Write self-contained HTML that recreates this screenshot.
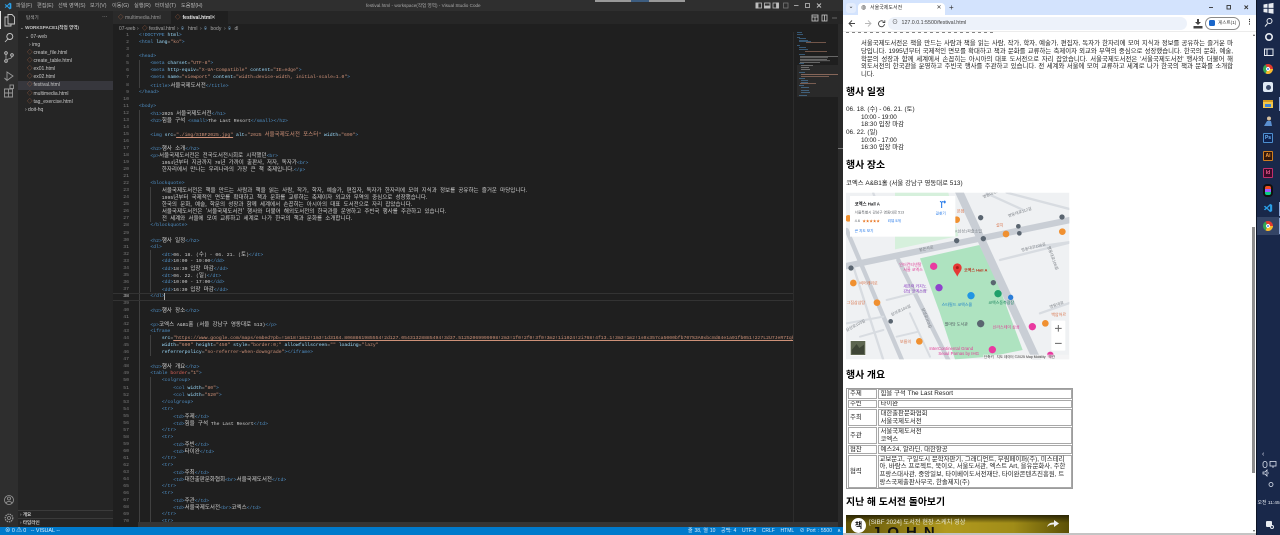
<!DOCTYPE html>
<html lang="ko"><head><meta charset="UTF-8"><title>festival.html</title>
<style>
html,body{margin:0;padding:0;width:1280px;height:535px;overflow:hidden;background:#1f1f1f}
body{position:relative;font-family:"Liberation Sans","Noto Sans CJK KR",sans-serif}
.a{position:absolute;white-space:nowrap}
.r{position:absolute}
#code{position:absolute;left:139px;top:32.2px;font:4.75px/7.05px "Liberation Mono","Noto Sans CJK KR",monospace;color:#cfcfcf;width:654px;height:494.8px;overflow:hidden}
#code div{height:7.05px;white-space:pre}
#code b{font-weight:normal;color:#4f8fc5}
#code i{font-style:normal;color:#9cdcfe}
#code u{text-decoration:none;color:#ce9178}
#code em{font-style:normal;font-size:5.5px;line-height:7.05px;word-spacing:1.65px;font-family:"Noto Sans CJK KR",sans-serif}
#nums{position:absolute;left:113px;width:16px;top:32.2px;font:4.75px/7.05px "Liberation Mono",monospace;color:#7d7d7d;text-align:right;white-space:pre;height:494.8px;overflow:hidden}
.side{color:#c8c8c8;font-size:5px;line-height:8px}
.ic{color:#c0704a;font-size:5.5px;line-height:8px;position:absolute}
.menu{color:#b8b8b8;font-size:5.2px;line-height:8px;top:1.5px}
.p{font-size:6.4px;line-height:8px;color:#1a1a1a}
.j{text-align:justify;text-align-last:justify;width:372px;left:861px;white-space:normal}
.h{font-size:9.9px;line-height:12px;font-weight:700;color:#000;left:846px}
.td{position:absolute;border:1px solid #a8a8a8;box-sizing:border-box;font-size:6.4px;line-height:7.9px;color:#222;padding-left:1.5px;display:flex;align-items:center;background:#fff;overflow:hidden;white-space:nowrap}
.tk{position:absolute;left:1263px;width:10px;height:10px;box-sizing:border-box}
.chrome{border-radius:50%;background:conic-gradient(#e33b2e 0 120deg,#f9bb2d 120deg 240deg,#34a853 240deg 360deg);transform:rotate(-30deg)}
.chrome:after{content:"";position:absolute;left:2.6px;top:2.6px;width:4.8px;height:4.8px;border-radius:50%;background:#4a8ef0;border:.5px solid #fff;box-sizing:border-box}
.ad{font-size:5px;font-weight:700;text-align:center;line-height:8px;border-radius:1px;border:1px solid}
</style></head><body>

<!-- VS Code frame -->
<div class="r" style="left:0;top:0;width:843px;height:11px;background:#2f2f2f"></div>
<div class="r" style="left:18px;top:11px;width:825px;height:13px;background:#262626"></div>
<div class="r" style="left:0;top:11px;width:18px;height:516px;background:#2e2e2e"></div>
<div class="r" style="left:18px;top:11px;width:95px;height:516px;background:#252525"></div>
<div class="r" style="left:113px;top:24px;width:730px;height:503px;background:#1f1f1f"></div>
<div class="r" style="left:171px;top:11px;width:57px;height:13px;background:#1f1f1f"></div>
<div class="r" style="left:113px;top:11px;width:58px;height:13px;background:#2a2a2a"></div>
<div class="r" style="left:0;top:527px;width:843px;height:8px;background:#007acc"></div>

<!-- title bar -->
<svg class="r" style="left:4px;top:2px" width="8" height="8" viewBox="0 0 24 24"><path d="M17 2 7 12l10 10 5-2.5V4.500zM17 7v10l-6-5zM2 8l3-1.500 4 3.500-2.500 2.500zM2 16l3 1.500 4-3.500-2.500-2.500z" fill="#2a9fe8"/></svg>
<span class="a menu" style="left:16px">파일(F)</span>
<span class="a menu" style="left:37px">편집(E)</span>
<span class="a menu" style="left:58px">선택 영역(S)</span>
<span class="a menu" style="left:90px">보기(V)</span>
<span class="a menu" style="left:112px">이동(G)</span>
<span class="a menu" style="left:134px">실행(R)</span>
<span class="a menu" style="left:155px">터미널(T)</span>
<span class="a menu" style="left:181px">도움말(H)</span>
<span class="a" style="left:366px;top:1.5px;font-size:4.6px;line-height:8px;color:#a8a8a8">festival.html - workspace(작업 영역) - Visual Studio Code</span>
<div class="r" style="left:595px;top:0;width:90px;height:1.5px;background:#9a9a9a"></div>
<div class="r" style="left:631px;top:0;width:18px;height:1.5px;background:#3d5d80"></div>
<svg class="r" style="left:755px;top:0" width="88" height="11" fill="none" stroke="#bdbdbd" stroke-width=".8">
<rect x="1" y="3" width="5.5" height="5"/><rect x="1" y="3" width="2" height="5" fill="#bdbdbd"/>
<rect x="9.5" y="3" width="5.5" height="5"/><rect x="9.5" y="6" width="5.5" height="2" fill="#bdbdbd"/>
<rect x="18" y="3" width="5.5" height="5"/><rect x="21.5" y="3" width="2" height="5" fill="#bdbdbd"/>
<rect x="28.5" y="3" width="4.5" height="5" stroke="#777"/>
<path d="M39 5.500h4.500" /><rect x="50.5" y="3.500" width="4" height="4"/><path d="M62 3.500l4 4M66 3.500l-4 4" stroke-width="1"/></svg>

<!-- activity bar -->
<div class="r" style="left:0;top:11px;width:1px;height:18px;background:#e0e0e0"></div>
<svg class="r" style="left:0;top:11px" width="18" height="90" fill="none" stroke="#c9c9c9" stroke-width=".9">
<path d="M8 3.500h4l2.500 2.500v7h-6.500zM8 6H5v9h6v-2"/>
<circle cx="9.800" cy="25.500" r="3"/><path d="M7.800 28 5 31"/>
<circle cx="6" cy="42" r="1.300"/><circle cx="6" cy="50" r="1.300"/><circle cx="12" cy="44" r="1.300"/><path d="M6 43.500v5M12 45.500c0 2.500-4 2-5.500 3.500" stroke="#9a9a9a"/>
<path d="M7 61l6 4-6 4.500zM4.500 67l2 2" stroke="#9a9a9a"/>
<path d="M4.500 78h4v4h-4zM8.500 82h4v-4h-4zM4.500 82h4v4h-4zM8.500 82v4h4v-4z" stroke="#9a9a9a"/><rect x="10" y="74" width="3.500" height="3.500" stroke="#9a9a9a"/></svg>
<svg class="r" style="left:2px;top:493px" width="14" height="30" fill="none" stroke="#9a9a9a" stroke-width=".8">
<circle cx="7" cy="7" r="4.500"/><circle cx="7" cy="5.500" r="1.500"/><path d="M4 10c1-2 5-2 6 0"/>
<circle cx="7" cy="25" r="1.500"/><circle cx="7" cy="25" r="3.800" stroke-dasharray="1.500 .8" stroke-width="1.200"/></svg>

<!-- sidebar -->
<span class="a side" style="left:26px;top:14px;font-size:4.6px;color:#b0b0b0">탐색기</span>
<span class="a side" style="left:102px;top:13px;font-size:5.7px;color:#b0b0b0">···</span>
<span class="a side" style="left:20px;top:24px;font-size:4.6px">⌄ <b>WORKSPACE1(작업 영역)</b></span>
<span class="a side" style="left:25px;top:32.5px">⌄ 07-web</span>
<span class="a side" style="left:29px;top:40.5px">› img</span>
<div class="r" style="left:18px;top:81px;width:95px;height:9px;background:#37373d"></div>
<span class="ic" style="left:27px;top:49px">◇</span><span class="a side" style="left:33.5px;top:49px">create_file.html</span>
<span class="ic" style="left:27px;top:57px">◇</span><span class="a side" style="left:33.5px;top:57px">create_table.html</span>
<span class="ic" style="left:27px;top:65px">◇</span><span class="a side" style="left:33.5px;top:65px">ex01.html</span>
<span class="ic" style="left:27px;top:73px">◇</span><span class="a side" style="left:33.5px;top:73px">ex02.html</span>
<span class="ic" style="left:27px;top:81px">◇</span><span class="a side" style="left:33.5px;top:81px">festival.html</span>
<span class="ic" style="left:27px;top:89.5px">◇</span><span class="a side" style="left:33.5px;top:89.5px">multimedia.html</span>
<span class="ic" style="left:27px;top:98px">◇</span><span class="a side" style="left:33.5px;top:98px">tag_exercise.html</span>
<span class="a side" style="left:25px;top:106px">› doit-hq</span>
<div class="r" style="left:18px;top:510px;width:95px;height:1px;background:#3a3a3a"></div>
<div class="r" style="left:18px;top:518px;width:95px;height:1px;background:#3a3a3a"></div>
<span class="a side" style="left:20px;top:511px;font-size:4.6px">› <b>개요</b></span>
<span class="a side" style="left:20px;top:519px;font-size:4.6px">› <b>타임라인</b></span>

<!-- tabs -->
<span class="ic" style="left:118px;top:14px">◇</span>
<span class="a side" style="left:125px;top:14px;color:#9a9a9a;font-size:5.1px">multimedia.html</span>
<span class="ic" style="left:175px;top:14px">◇</span>
<span class="a side" style="left:182.5px;top:14px;color:#e6e6e6;font-size:5px;font-weight:700">festival.html</span>
<span class="a side" style="left:211px;top:14px;color:#d8d8d8;font-size:5.5px">✕</span>
<svg class="r" style="left:810px;top:13px" width="30" height="10" fill="none" stroke="#c8c8c8" stroke-width=".8"><rect x="2" y="2" width="6" height="6"/><path d="M2 4h6M5 4v4"/><rect x="12" y="2" width="5" height="6"/><path d="M14.500 2v6"/><path d="M22 5h5" stroke="#777"/></svg>
<span class="a side" style="left:119px;top:24.5px;color:#a4a4a4">07-web</span>
<span class="a side" style="left:137px;top:24.5px;color:#a4a4a4">›</span>
<span class="ic" style="left:142px;top:24.5px">◇</span>
<span class="a side" style="left:149px;top:24.5px;color:#a4a4a4">festival.html</span>
<span class="a side" style="left:177px;top:24.5px;color:#a4a4a4">›</span>
<span class="a side" style="left:181px;top:24.5px;color:#7fb2dc">⌾</span>
<span class="a side" style="left:188px;top:24.5px;color:#a4a4a4">html</span>
<span class="a side" style="left:200px;top:24.5px;color:#a4a4a4">›</span>
<span class="a side" style="left:204px;top:24.5px;color:#7fb2dc">⌾</span>
<span class="a side" style="left:210.5px;top:24.5px;color:#a4a4a4">body</span>
<span class="a side" style="left:224px;top:24.5px;color:#a4a4a4">›</span>
<span class="a side" style="left:228px;top:24.5px;color:#7fb2dc">⌾</span>
<span class="a side" style="left:234.5px;top:24.5px;color:#a4a4a4">dl</span>

<!-- indent guides -->
<div class="r" style="left:139px;top:60px;width:.6px;height:28px;background:#404040"></div>
<div class="r" style="left:139px;top:110px;width:.6px;height:412px;background:#404040"></div>
<div class="r" style="left:150.4px;top:187px;width:.6px;height:35px;background:#404040"></div>
<div class="r" style="left:150.4px;top:250px;width:.6px;height:42px;background:#404040"></div>
<div class="r" style="left:150.4px;top:335px;width:.6px;height:21px;background:#404040"></div>
<div class="r" style="left:150.4px;top:377px;width:.6px;height:145px;background:#404040"></div>
<div class="r" style="left:113px;top:293px;width:680px;height:7.5px;border-top:.5px solid #333;border-bottom:.5px solid #333;box-sizing:border-box"></div>
<div class="r" style="left:164px;top:293px;width:.6px;height:7px;background:#aaa"></div>

<div id="nums">1
2
3
4
5
6
7
8
9
10
11
12
13
14
15
16
17
18
19
20
21
22
23
24
25
26
27
28
29
30
31
32
33
34
35
36
37
<span style="color:#cfcfcf">38</span>
39
40
41
42
43
44
45
46
47
48
49
50
51
52
53
54
55
56
57
58
59
60
61
62
63
64
65
66
67
68
69
70</div>

<div id="code"><div><b>&lt;!DOCTYPE</b> <i>html</i><b>&gt;</b></div>
<div><b>&lt;html</b> <i>lang</i>=<u>"ko"</u><b>&gt;</b></div>
<div></div>
<div><b>&lt;head&gt;</b></div>
<div>    <b>&lt;meta</b> <i>charset</i>=<u>"UTF-8"</u><b>&gt;</b></div>
<div>    <b>&lt;meta</b> <i>http-equiv</i>=<u>"X-UA-Compatible"</u> <i>content</i>=<u>"IE=edge"</u><b>&gt;</b></div>
<div>    <b>&lt;meta</b> <i>name</i>=<u>"viewport"</u> <i>content</i>=<u>"width=device-width, initial-scale=1.0"</u><b>&gt;</b></div>
<div>    <b>&lt;title&gt;</b><em>서울국제도서전</em><b>&lt;/title&gt;</b></div>
<div><b>&lt;/head&gt;</b></div>
<div></div>
<div><b>&lt;body&gt;</b></div>
<div>    <b>&lt;h1&gt;</b>2025 <em>서울국제도서전</em><b>&lt;/h1&gt;</b></div>
<div>    <b>&lt;h2&gt;</b><em>힘을 구석</em> <b>&lt;small&gt;</b>The Last Resort<b>&lt;/small&gt;&lt;/h2&gt;</b></div>
<div></div>
<div>    <b>&lt;img</b> <i>src</i>=<u style="text-decoration:underline">"./img/SIBF2025.jpg"</u> <i>alt</i>=<u>"2025 <em>서울국제도서전 포스터</em>"</u> <i>width</i>=<u>"600"</u><b>&gt;</b></div>
<div></div>
<div>    <b>&lt;h2&gt;</b><em>행사 소개</em><b>&lt;/h2&gt;</b></div>
<div>    <b>&lt;p&gt;</b><em>서울국제도서전은 전국도서전시회로 시작했던</em><b>&lt;br&gt;</b></div>
<div>        1954<em>년부터 지금까지</em> 70<em>년 가까이 출판사, 저자, 독자가</em><b>&lt;br&gt;</b></div>
<div>        <em>한자리에서 만나는 우리나라의 가장 큰 책 축제입니다.</em><b>&lt;/p&gt;</b></div>
<div></div>
<div>    <b>&lt;blockquote&gt;</b></div>
<div>        <em>서울국제도서전은 책을 만드는 사람과 책을 읽는 사람, 작가, 학자, 예술가, 편집자, 독자가 한자리에 모여 지식과 정보를 공유하는 즐거운 마당입니다.</em></div>
<div>        1995<em>년부터 국제적인 면모를 확대하고 책과 문화를 교류하는 축제이자 외교와 무역의 중심으로 성장했습니다.</em></div>
<div>        <em>한국의 문화, 예술, 학문의 성장과 함께 세계에서 손꼽히는 아시아의 대표 도서전으로 자리 잡았습니다.</em></div>
<div>        <em>서울국제도서전은 '서울국제도서전' 행사와 더불어 해외도서전의 한국관을 운영하고 주빈국 행사를 주관하고 있습니다.</em></div>
<div>        <em>전 세계와 서울에 모여 교류하고 세계로 나가 한국의 책과 문화를 소개합니다.</em></div>
<div>    <b>&lt;/blockquote&gt;</b></div>
<div></div>
<div>    <b>&lt;h2&gt;</b><em>행사 일정</em><b>&lt;/h2&gt;</b></div>
<div>    <b>&lt;dl&gt;</b></div>
<div>        <b>&lt;dt&gt;</b>06. 18. (<em>수</em>) - 06. 21. (<em>토</em>)<b>&lt;/dt&gt;</b></div>
<div>        <b>&lt;dd&gt;</b>10:00 - 19:00<b>&lt;/dd&gt;</b></div>
<div>        <b>&lt;dd&gt;</b>18:30 <em>입장 마감</em><b>&lt;/dd&gt;</b></div>
<div>        <b>&lt;dt&gt;</b>06. 22. (<em>일</em>)<b>&lt;/dt&gt;</b></div>
<div>        <b>&lt;dd&gt;</b>10:00 - 17:00<b>&lt;/dd&gt;</b></div>
<div>        <b>&lt;dd&gt;</b>16:30 <em>입장 마감</em><b>&lt;/dd&gt;</b></div>
<div>    <b>&lt;/dl&gt;</b></div>
<div></div>
<div>    <b>&lt;h2&gt;</b><em>행사 장소</em><b>&lt;/h2&gt;</b></div>
<div></div>
<div>    <b>&lt;p&gt;</b><em>코엑스</em> A&amp;B1<em>홀</em> (<em>서울 강남구 영동대로</em> 513)<b>&lt;/p&gt;</b></div>
<div>    <b>&lt;iframe</b></div>
<div>        <i>src</i>=<u style="text-decoration:underline">"https://www.google.com/maps/embed?pb=!1m18!1m12!1m3!1d3164.8068861985554!2d127.05431328885494!3d37.51252069999998!2m3!1f0!2f0!3f0!3m2!1i1024!2i768!4f13.1!3m3!1m2!1s0x357ca5000bfb707%3A0xbc8d84e1a91fb051!2z7L2U7JeR7Iqk</u></div>
<div>        <i>width</i>=<u>"600"</u> <i>height</i>=<u>"450"</u> <i>style</i>=<u>"border:0;"</u> <i>allowfullscreen</i>=<u>""</u> <i>loading</i>=<u>"lazy"</u></div>
<div>        <i>referrerpolicy</i>=<u>"no-referrer-when-downgrade"</u><b>&gt;&lt;/iframe&gt;</b></div>
<div></div>
<div>    <b>&lt;h2&gt;</b><em>행사 개요</em><b>&lt;/h2&gt;</b></div>
<div>    <b>&lt;table</b> <i style="color:#e0645a">border</i>=<u>"1"</u><b>&gt;</b></div>
<div>        <b>&lt;colgroup&gt;</b></div>
<div>            <b>&lt;col</b> <i>width</i>=<u>"80"</u><b>&gt;</b></div>
<div>            <b>&lt;col</b> <i>width</i>=<u>"520"</u><b>&gt;</b></div>
<div>        <b>&lt;/colgroup&gt;</b></div>
<div>        <b>&lt;tr&gt;</b></div>
<div>            <b>&lt;td&gt;</b><em>주제</em><b>&lt;/td&gt;</b></div>
<div>            <b>&lt;td&gt;</b><em>힘을 구석</em> The Last Resort<b>&lt;/td&gt;</b></div>
<div>        <b>&lt;/tr&gt;</b></div>
<div>        <b>&lt;tr&gt;</b></div>
<div>            <b>&lt;td&gt;</b><em>주빈</em><b>&lt;/td&gt;</b></div>
<div>            <b>&lt;td&gt;</b><em>타이완</em><b>&lt;/td&gt;</b></div>
<div>        <b>&lt;/tr&gt;</b></div>
<div>        <b>&lt;tr&gt;</b></div>
<div>            <b>&lt;td&gt;</b><em>주최</em><b>&lt;/td&gt;</b></div>
<div>            <b>&lt;td&gt;</b><em>대한출판문화협회</em><b>&lt;br&gt;</b><em>서울국제도서전</em><b>&lt;/td&gt;</b></div>
<div>        <b>&lt;/tr&gt;</b></div>
<div>        <b>&lt;tr&gt;</b></div>
<div>            <b>&lt;td&gt;</b><em>주관</em><b>&lt;/td&gt;</b></div>
<div>            <b>&lt;td&gt;</b><em>서울국제도서전</em><b>&lt;br&gt;</b><em>코엑스</em><b>&lt;/td&gt;</b></div>
<div>        <b>&lt;/tr&gt;</b></div>
<div>        <b>&lt;tr&gt;</b></div></div>

<!-- editor scrollbars/minimap -->
<div class="r" style="left:138px;top:522px;width:705px;height:5px;background:#3b3b3b;opacity:.8"></div>
<div class="r" style="left:793px;top:32px;width:.7px;height:490px;background:#2c2c2c"></div>
<div class="r" style="left:838px;top:24px;width:5px;height:503px;background:#2a2a2a"></div>
<div class="r" style="left:838px;top:148px;width:5px;height:1px;background:#777"></div>
<svg class="r" style="left:797px;top:32px" width="41" height="66">
<g fill="#4f8fc5" opacity=".85"><rect x="0" y="0" width="5" height=".6"/><rect x="0" y="2" width="6" height=".6"/><rect x="0" y="5" width="3" height=".6"/><rect x="2" y="6" width="7" height=".6"/><rect x="2" y="8" width="9" height=".6"/><rect x="2" y="9" width="12" height=".6"/><rect x="0" y="13" width="3" height=".6"/><rect x="2" y="15" width="7" height=".6"/><rect x="2" y="17" width="9" height=".6"/><rect x="2" y="22" width="6" height=".6"/><rect x="2" y="31" width="5" height=".6"/><rect x="2" y="40" width="6" height=".6"/><rect x="2" y="46" width="6" height=".6"/><rect x="4" y="48" width="7" height=".6"/><rect x="4" y="50" width="7" height=".6"/><rect x="2" y="53" width="5" height=".6"/><rect x="4" y="55" width="8" height=".6"/><rect x="4" y="58" width="8" height=".6"/><rect x="4" y="60" width="9" height=".6"/><rect x="2" y="63" width="8" height=".6"/></g>
<g fill="#c8c8c8" opacity=".7"><rect x="3" y="24" width="38" height=".6"/><rect x="3" y="25.5" width="28" height=".6"/><rect x="3" y="27" width="27" height=".6"/><rect x="3" y="28.5" width="30" height=".6"/><rect x="3" y="30" width="20" height=".6"/><rect x="4" y="33" width="12" height=".6"/><rect x="4" y="35" width="8" height=".6"/><rect x="4" y="37" width="9" height=".6"/></g>
<g fill="#ce9178" opacity=".8"><rect x="9" y="10" width="20" height=".6"/><rect x="8" y="19" width="22" height=".6"/><rect x="4" y="42" width="37" height=".7"/><rect x="4" y="44" width="28" height=".6"/><rect x="3" y="51" width="16" height=".6"/></g>
<rect x="0" y="33" width="41" height="32" fill="#fff" opacity=".05"/>
</svg>

<!-- status bar -->
<span class="a" style="left:5px;top:527px;font-size:5.4px;line-height:8px;color:#e6f2fb">⊗ 0 ⚠ 0 &nbsp;&nbsp;-- VISUAL --</span>
<span class="a" style="left:688px;top:527px;font-size:5px;line-height:8px;color:#d6eaf8;word-spacing:.5px">줄 38, 열 10 &nbsp;&nbsp;공백: 4 &nbsp;&nbsp;UTF-8 &nbsp;&nbsp;CRLF &nbsp;&nbsp;HTML &nbsp;&nbsp;⊘ Port : 5500 &nbsp;&nbsp;ጰ &nbsp;&nbsp;ᗝ</span>

<!-- browser -->
<div class="r" style="left:843px;top:0;width:413px;height:535px;background:#fff"></div>
<div class="r" style="left:843px;top:0;width:413px;height:15px;background:#d3e3fd"></div>
<div class="r" style="left:846px;top:3px;width:10px;height:10px;border-radius:3px;background:#e4edfc"></div>
<span class="a" style="left:848.5px;top:3px;font-size:6px;line-height:9px;color:#333">⌄</span>
<div class="r" style="left:858px;top:3px;width:87px;height:12px;border-radius:4px 4px 0 0;background:#fff"></div>
<span class="a" style="left:861px;top:4px;font-size:6px;line-height:8px;color:#444">◍</span>
<span class="a" style="left:870px;top:4px;font-size:5px;line-height:8px;color:#333">서울국제도서전</span>
<span class="a" style="left:936.5px;top:3.5px;font-size:6px;line-height:8px;color:#444">✕</span>
<span class="a" style="left:949px;top:2.5px;font-size:8px;line-height:9px;color:#333">+</span>
<svg class="r" style="left:1205px;top:2px" width="50" height="11" fill="none" stroke="#333" stroke-width=".9"><path d="M4 5.500h4"/><rect x="22" y="3.500" width="3.500" height="3.500"/><path d="M39.500 3.500l3.500 3.500M43 3.500l-3.500 3.500"/></svg>
<svg class="r" style="left:846px;top:15px" width="50" height="17" fill="none" stroke="#444" stroke-width=".9"><path d="M3 8.500h6M6 5.500l-3 3 3 3"/><path d="M19 8.500h6M22 5.500l3 3-3 3" stroke="#b8b8b8"/><path d="M37.500 6.500a3 3 0 1 0 1 2.500M38.800 5.300v2.200h-2.200"/></svg>
<div class="r" style="left:888px;top:17px;width:299px;height:13px;border-radius:7px;background:#edf2fa"></div>
<span class="a" style="left:892px;top:19px;font-size:6px;line-height:8px;color:#444">⊙</span>
<span class="a" style="left:901.5px;top:19px;font-size:5.3px;line-height:8px;color:#3c3c3c">127.0.0.1:5500/festival.html</span>
<svg class="r" style="left:1192px;top:18px" width="14" height="12" fill="#444"><path d="M5 1h2v3h2L6 7 3 4h2zM1.500 8h9v2.500h-9z"/></svg>
<div class="r" style="left:1205px;top:17px;width:35px;height:12.5px;border-radius:7px;border:.7px solid #8a8a8a;box-sizing:border-box"></div>
<div class="r" style="left:1209px;top:20px;width:6px;height:6px;border-radius:1.5px;background:#1a66c9"></div>
<span class="a" style="left:1218px;top:19px;font-size:4.6px;line-height:8px;color:#333">게스트(1)</span>
<span class="a" style="left:1246px;top:19px;font-size:7px;line-height:8px;color:#333;font-weight:700">⋮</span>

<!-- page -->
<div class="r" style="left:843px;top:31px;width:413px;height:1px;background:#ececec"></div>
<div class="r" style="left:846px;top:31.5px;width:150px;height:1px;background:repeating-linear-gradient(90deg,#333 0 3px,transparent 3px 6px);opacity:.6"></div>
<div class="a p j" style="top:40px">서울국제도서전은 책을 만드는 사람과 책을 읽는 사람, 작가, 학자, 예술가, 편집자, 독자가 한자리에 모여 지식과 정보를 공유하는 즐거운 마</div>
<div class="a p j" style="top:48px">당입니다. 1995년부터 국제적인 면모를 확대하고 책과 문화를 교류하는 축제이자 외교와 무역의 중심으로 성장했습니다. 한국의 문화, 예술,</div>
<div class="a p j" style="top:55.5px">학문의 성장과 함께 세계에서 손꼽히는 아시아의 대표 도서전으로 자리 잡았습니다. 서울국제도서전은 '서울국제도서전' 행사와 더불어 해</div>
<div class="a p j" style="top:63px">외도서전의 한국관을 운영하고 주빈국 행사를 주관하고 있습니다. 전 세계와 서울에 모여 교류하고 세계로 나가 한국의 책과 문화를 소개합</div>
<div class="a p" style="left:861px;top:71px">니다.</div>
<div class="a h" style="top:87px">행사 일정</div>
<div class="a p" style="left:846px;top:105.5px">06. 18. (수) - 06. 21. (토)</div>
<div class="a p" style="left:861px;top:113.5px;letter-spacing:-.15px">10:00 - 19:00</div>
<div class="a p" style="left:861px;top:121px">18:30 입장 마감</div>
<div class="a p" style="left:846px;top:128.5px">06. 22. (일)</div>
<div class="a p" style="left:861px;top:136.5px;letter-spacing:-.15px">10:00 - 17:00</div>
<div class="a p" style="left:861px;top:144px">16:30 입장 마감</div>
<div class="a h" style="top:160px">행사 장소</div>
<div class="a p" style="left:846px;top:180px">코엑스 A&amp;B1홀 (서울 강남구 영동대로 513)</div>

<!-- map -->
<svg class="r" style="left:840px;top:180px" width="250" height="190" viewBox="0 0 750 570" font-family="Liberation Sans,Noto Sans CJK KR,sans-serif">
<defs><clipPath id="m"><rect x="18" y="38" width="670" height="500"/></clipPath></defs>
<g clip-path="url(#m)">
<rect x="18" y="38" width="670" height="500" fill="#eff1f3"/>
<path d="M165 38h160l30 130-190 40z" fill="#d6f0dc"/>
<path d="M240 235 418 195 470 300 548 510 450 530 345 538 300 400z" fill="#aee3c0"/>
<g fill="none" stroke="#c9ced5" stroke-linecap="round">
<path d="M355 30 600 560" stroke-width="24"/>
<path d="M0 262 700 118" stroke-width="19"/>
<path d="M175 240 335 560" stroke-width="13"/>
<path d="M20 150 190 550" stroke-width="13"/>
<path d="M440 40 550 90 M500 38 700 90 M590 200 700 185 M480 240 700 185 M40 260 130 540 M600 400 700 365 M100 40 130 120" stroke-width="7" stroke="#d8dce1"/>
<path d="M20 430 130 410 M140 360 260 330 M210 400 270 530 M60 470 130 450 M170 470 235 455" stroke-width="6" stroke="#d8dce1"/>
</g>
<g fill="#7a7f85" font-size="12"><text x="238" y="214" transform="rotate(-12 238 214)">봉은사로</text><text x="430" y="55" transform="rotate(-22 430 55)">영동대로114길</text><text x="505" y="112" transform="rotate(-18 505 112)">영동대로112길</text><text x="545" y="215" transform="rotate(-15 545 215)">영동대로106길</text><text x="622" y="200" transform="rotate(70 622 200)">영동대로106길</text><text x="155" y="408" transform="rotate(-25 155 408)">삼성로104길</text><text x="245" y="385" transform="rotate(70 245 385)">삼성로103길</text><text x="20" y="455" transform="rotate(-28 20 455)">삼성로103길</text><text x="345" y="157">K삼성1파출소입</text><text x="630" y="385" transform="rotate(-18 630 385)">영동대로</text></g>
<text x="634" y="408" font-size="12" fill="#d9734a">백암어르</text>
<text x="351" y="97" font-size="12" fill="#d9734a">본점</text><text x="468" y="140" font-size="12" fill="#d9734a">설치</text>
<text x="58" y="313" font-size="12" fill="#d9734a">비어캐리로</text><text x="20" y="372" font-size="12" fill="#d9734a">그집삼삼탕</text><text x="180" y="489" font-size="12" fill="#d9734a">보름의</text>
<text x="178" y="258" font-size="12" fill="#e03c96">인터컨티넨탈</text><text x="190" y="273" font-size="12" fill="#e03c96">서울 코엑스</text>
<text x="190" y="322" font-size="12" fill="#8a3bc2">세븐럭 카지노</text><text x="190" y="337" font-size="12" fill="#8a3bc2">강남 코엑스점</text>
<text x="305" y="378" font-size="12" fill="#1a7fc9">스타필드 코엑스몰</text>
<text x="445" y="372" font-size="12" fill="#16805a">코엑스동측광장</text>
<text x="314" y="437" font-size="12" fill="#50585f">별마당 도서관</text>
<text x="458" y="445" font-size="12" fill="#e03c96">신라스테이 삼성</text>
<text x="268" y="510" font-size="13" fill="#e03c96">InterContinental Grand</text><text x="295" y="525" font-size="13" fill="#e03c96">Seoul Parnas by IHG</text>
<text x="372" y="274" font-size="12" fill="#b8321f" font-weight="700">코엑스 Hall A</text>
<g fill="#f09030"><circle cx="40" cy="309" r="10"/><circle cx="111" cy="368" r="10"/><circle cx="238" cy="484" r="10"/><circle cx="498" cy="162" r="10"/><circle cx="667" cy="155" r="10"/><circle cx="350" cy="119" r="10"/><circle cx="25" cy="115" r="10"/><circle cx="616" cy="430" r="10"/></g>
<g fill="#e93aa0"><circle cx="281" cy="259" r="11"/><circle cx="577" cy="440" r="11"/><circle cx="457" cy="509" r="11"/><circle cx="631" cy="525" r="10"/></g>
<circle cx="297" cy="323" r="11" fill="#8f42cc"/><circle cx="393" cy="347" r="11" fill="#2196e3"/><circle cx="474" cy="341" r="11" fill="#1fa06b"/><circle cx="512" cy="352" r="8" fill="#2b7ed8"/>
<g fill="#5a6570"><circle cx="33" cy="264" r="8"/><circle cx="422" cy="431" r="11"/><circle cx="152" cy="424" r="7"/><circle cx="460" cy="308" r="8"/><circle cx="350" cy="182" r="8"/><circle cx="430" cy="176" r="8"/><circle cx="422" cy="113" r="8"/><circle cx="535" cy="139" r="7"/><circle cx="538" cy="160" r="7"/><circle cx="666" cy="111" r="8"/></g>
<path d="M352 290c-5-11-13-17-13-27a13 13 0 0 1 26 0c0 10-9 16-13 27z" fill="#e53935"/><circle cx="352" cy="263" r="4.500" fill="#a81d1a"/>
<rect x="31" y="482" width="46" height="44" fill="#5d6650" stroke="#fff" stroke-width="2"/><path d="M35 510l15-18 8 12 14-10v28H35z" fill="#3e4536"/>
<rect x="634" y="422" width="42" height="90" rx="3" fill="#fff"/><path d="M645 445h20M655 435v20M645 490h20" stroke="#666" stroke-width="3"/>
<rect x="430" y="524" width="258" height="14" fill="#f5f5f5" opacity=".8"/><text x="432" y="534" font-size="10.5" fill="#333">단축키 &#160; 지도 데이터 ©2025 Map Mobility &#160; 약관</text>
<rect x="30" y="48" width="316" height="122" fill="#fff"/>
<text x="44" y="76" font-size="13" font-weight="700" fill="#202124">코엑스 Hall A</text>
<text x="44" y="100" font-size="11" fill="#5f6368">서울특별시 강남구 영동대로 513</text>
<text x="44" y="126" font-size="11.5" fill="#5f6368">4.6</text><text x="67" y="126" font-size="10.5" fill="#e7711b">★★★★★</text>
<text x="143" y="126" font-size="11" fill="#1a73e8">리뷰 5개</text>
<text x="44" y="156" font-size="11" fill="#1a73e8">큰 지도 보기</text>
<path d="M300 64l5 3 5-3M305 67v17M314 62v8M310 66h8" stroke="#1a73e8" stroke-width="3" fill="none"/>
<text x="287" y="103" font-size="11" fill="#1a73e8">길찾기</text>
</g></svg>

<div class="a h" style="top:370px">행사 개요</div>
<!-- table -->
<div class="r" style="left:846px;top:388px;width:226.5px;height:101px;border:1px solid #9c9c9c;box-sizing:border-box;background:#fff"></div>
<div class="td" style="left:847.5px;top:389px;width:29.5px;height:9.5px">주제</div><div class="td" style="left:878px;top:389px;width:193.5px;height:9.5px">힘을 구석 The Last Resort</div>
<div class="td" style="left:847.5px;top:399.5px;width:29.5px;height:8.5px">주빈</div><div class="td" style="left:878px;top:399.5px;width:193.5px;height:8.5px">타이완</div>
<div class="td" style="left:847.5px;top:409px;width:29.5px;height:17px">주최</div><div class="td" style="left:878px;top:409px;width:193.5px;height:17px;display:block">대한출판문화협회<br>서울국제도서전</div>
<div class="td" style="left:847.5px;top:427px;width:29.5px;height:17px">주관</div><div class="td" style="left:878px;top:427px;width:193.5px;height:17px;display:block">서울국제도서전<br>코엑스</div>
<div class="td" style="left:847.5px;top:445px;width:29.5px;height:9px">협찬</div><div class="td" style="left:878px;top:445px;width:193.5px;height:9px">예스24, 알라딘, 대한항공</div>
<div class="td" style="left:847.5px;top:455px;width:29.5px;height:33px">협력</div><div class="td" style="left:878px;top:455px;width:193.5px;height:33px"></div>
<div class="a" style="left:879.5px;top:455.5px;font-size:6.4px;line-height:7.9px;color:#222">교보문고, 구일도시 문학자판기, 그래디언트, 무림페이퍼(주), 미스테리<br>아, 바람스 프로젝트, 북이오, 서울도서관, 엑스트 Art, 을유문화사, 주한<br>프랑스대사관, 중앙일보, 타이베이도서전재단, 타이완콘텐츠진흥원, 트<br>랑스국제출판사무국, 한솔제지(주)</div>
<div class="a h" style="top:497px">지난 해 도서전 돌아보기</div>
<!-- video -->
<div class="r" style="left:846px;top:515px;width:223px;height:20px;background:linear-gradient(90deg,#5f5208,#b19a1e 45%,#a08c18 75%,#5b5005);overflow:hidden">
<div class="r" style="left:0;top:0;width:223px;height:8px;background:linear-gradient(#2a2505,transparent)"></div>
<div class="r" style="left:5px;top:3px;width:15px;height:15px;border-radius:50%;background:#fff;color:#111;font-size:8px;line-height:15px;text-align:center;font-weight:700">책</div>
<span class="a" style="left:23px;top:3px;font-size:6.2px;line-height:9px;color:#e8e8d8">[SIBF 2024] 도서전 현장 스케치 영상</span>
<span class="a" style="left:26px;top:11px;font-size:15px;line-height:14px;color:#111;font-weight:700;letter-spacing:7px">JOHN</span>
<svg class="r" style="left:200px;top:3px" width="14" height="10"><path d="M1 9c1-3 3-4.500 7-4.500V2l5 3.500L8 9V6.500c-3 0-5 .5-7 2.500z" fill="#eee"/></svg>
</div>
<!-- scrollbar -->
<div class="r" style="left:1252px;top:227px;width:3px;height:246px;background:#8e8e8e"></div>
<div class="r" style="left:1252.5px;top:34px;border:1.5px solid transparent;border-bottom:2px solid #555;border-top:0"></div>
<div class="r" style="left:1252.5px;top:530px;border:1.5px solid transparent;border-top:2px solid #555;border-bottom:0"></div>
<div class="r" style="left:843px;top:533px;width:413px;height:2px;background:#c4c4c4"></div>

<!-- taskbar -->
<div class="r" style="left:1256px;top:0;width:24px;height:535px;background:#19284a"></div>
<div class="r" style="left:1256px;top:0;width:1px;height:535px;background:#0d1526"></div>
<div class="r" style="left:1257px;top:217px;width:23px;height:18px;background:#344465"></div>
<div class="r" style="left:1279px;top:97px;width:1px;height:14px;background:#8fa8d8"></div>
<div class="r" style="left:1279px;top:202px;width:1px;height:14px;background:#8fa8d8"></div>
<div class="r" style="left:1279px;top:218px;width:1px;height:16px;background:#8fa8d8"></div>
<svg class="r" style="left:1261.5px;top:2px" width="16" height="60" fill="none" stroke="#e8ecf2" stroke-width="1">
<path d="M1.500 2.500l4-.7v4H1.500zM6.500 1.700l5-.8v5h-5zM1.500 6.800h4v4l-4-.7zM6.500 6.800h5v5l-5-.8z" fill="#e8ecf2" stroke="none"/>
<circle cx="7.500" cy="19" r="2.500"/><path d="M5.500 21.500 3 24.500"/>
<circle cx="7" cy="35" r="3.200" stroke-width="1.600"/>
<rect x="2.500" y="47" width="8.500" height="6.500"/><path d="M5 47v6.500"/></svg>
<div class="tk chrome" style="top:64px"></div>
<div class="r" style="left:1263px;top:82px;width:10px;height:10px;border-radius:2px;background:#dfe9f5"></div><div class="r" style="left:1265.5px;top:85px;width:5px;height:5px;border-radius:50%;background:#3a4a6a"></div>
<div class="r" style="left:1263px;top:100px;width:10px;height:8px;background:#f3c64b;border-top:2px solid #d89c1d;box-sizing:border-box"></div><div class="r" style="left:1265px;top:104px;width:6px;height:3px;background:#3b82d6"></div>
<svg class="r" style="left:1263px;top:116px" width="10" height="11"><circle cx="6" cy="2.500" r="2" fill="#d6c0a0"/><path d="M1 10 4 5h4l1 5z" fill="#5a8fd0"/></svg>
<div class="tk ad" style="top:133px;background:#0f2250;color:#6fb8f7;border-color:#4d8fd0">Ps</div>
<div class="tk ad" style="top:151px;background:#33170a;color:#f8a040;border-color:#d07f20">Ai</div>
<div class="tk ad" style="top:168px;background:#3c0a28;color:#f05a90;border-color:#c0306c">Id</div>
<div class="r" style="left:1265px;top:186px;width:6px;height:9px;border-radius:2px;background:linear-gradient(#f24e1e 33%,#a259ff 33% 66%,#0acf83 66%);box-shadow:0 0 0 2px #111"></div>
<svg class="r" style="left:1263px;top:203px" width="10" height="10" viewBox="0 0 24 24"><path d="M17 2 7 12l10 10 5-2.500V4.500zM17 7v10l-6-5zM2 8l3-1.500 4 3.500-2.500 2.500zM2 16l3 1.500 4-3.500-2.500-2.500z" fill="#2a9fe8"/></svg>
<div class="tk chrome" style="top:221px"></div>
<span class="a" style="left:1262px;top:451px;font-size:7px;line-height:8px;color:#dde">‹</span>
<svg class="r" style="left:1260px;top:460px" width="20" height="60" fill="none" stroke="#dde3ee" stroke-width=".8">
<rect x="3" y="1.500" width="4" height="6" rx="2"/><rect x="10" y="1.500" width="6" height="4.500"/><path d="M13 6v2"/>
<path d="M3 12h2l2-2v6l-2-2H3zM8.500 12.500v1" /><circle cx="11" cy="24.500" r="2"/></svg>
<span class="a" style="left:1257.5px;top:500px;font-size:4.9px;line-height:8px;color:#e8ecf2">오전 11:45</span>
<div class="r" style="left:1266px;top:521px;width:6px;height:6px;background:#e8ecf2;border-radius:1px"></div>
<div class="r" style="left:1270px;top:525px;width:4px;height:4px;background:#19284a;border-radius:50%;border:.6px solid #e8ecf2;box-sizing:border-box"></div>
</body></html>
